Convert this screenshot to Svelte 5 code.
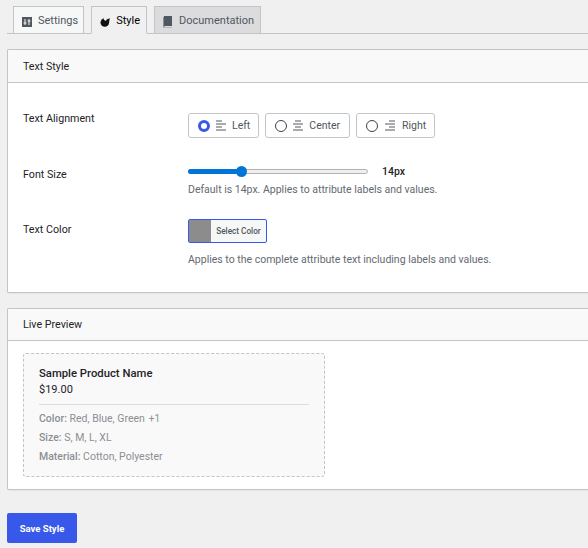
<script>
  const attrs = [
    { label: "Color:", value: "Red, Blue, Green", more: "+1" },
    { label: "Size:", value: "S, M, L, XL" },
    { label: "Material:", value: "Cotton, Polyester" },
  ];
  const aligns = [
    { name: "Left", checked: true, lines: ["M0 1h6", "M0 4h10", "M0 7h6", "M0 10h10"] },
    { name: "Center", checked: false, lines: ["M2 1h6", "M0 4h10", "M2 7h6", "M0 10h10"] },
    { name: "Right", checked: false, lines: ["M4 1h6", "M0 4h10", "M4 7h6", "M0 10h10"] },
  ];
</script>

<div class="page">
  <div class="tabs">
    <a class="tab">
      <svg class="icon" viewBox="0 0 10 10"><path fill="#50575e" d="M0 0h10v10H0z" /><path stroke="#f6f7f7" stroke-width="1" fill="none" d="M3 2v6M1.5 6h3M7 2v6M5.5 4h3" /></svg>
      Settings
    </a>
    <a class="tab active">
      <svg class="icon" viewBox="0 0 10 10"><circle cx="4.800" cy="5.500" r="4.300" fill="#111" /><path fill="#f0f0f1" d="M3.800 0h3v3.500c-.8.500-2 .3-3-1z" /><path fill="#111" d="M6 3.500 9.500 1c.3 1.500 0 3-.8 4.500z" /></svg>
      Style
    </a>
    <a class="tab muted">
      <svg class="icon book" viewBox="0 0 10 12"><path fill="#50575e" d="M1 0h8v10H2.500C1.700 10 1 10.300 1 11z" /><path fill="#8c8f94" d="M0 1h1v10.500h8v.5H1.500C.6 12 0 11.400 0 10.500z" /></svg>
      Documentation
    </a>
  </div>

  <section class="card">
    <h2>Text Style</h2>
    <div class="body settings">
      <div class="row">
        <div class="label">Text Alignment</div>
        <div class="field">
          <div class="aligns">
            {#each aligns as a}
              <label class="align">
                <span class="radio" class:on={a.checked}></span>
                <svg class="lines" viewBox="0 0 10 11">
                  {#each a.lines as d}<path {d} />{/each}
                </svg>
                {a.name}
              </label>
            {/each}
          </div>
        </div>
      </div>
      <div class="row">
        <div class="label">Font Size</div>
        <div class="field">
          <div class="slider">
            <div class="track"><div class="fill"></div><div class="thumb"></div></div>
            <span class="value">14px</span>
          </div>
          <p class="hint">Default is 14px. Applies to attribute labels and values.</p>
        </div>
      </div>
      <div class="row">
        <div class="label">Text Color</div>
        <div class="field">
          <button class="color"><span class="swatch"></span><span class="color-text">Select Color</span></button>
          <p class="hint">Applies to the complete attribute text including labels and values.</p>
        </div>
      </div>
    </div>
  </section>

  <section class="card preview-card">
    <h2>Live Preview</h2>
    <div class="body">
      <div class="preview">
        <div class="name">Sample Product Name</div>
        <div class="price">$19.00</div>
        <div class="attrs">
          {#each attrs as attr}
            <div class="attr"><b>{attr.label}</b> {attr.value}{#if attr.more}<span class="more">{attr.more}</span>{/if}</div>
          {/each}
        </div>
      </div>
    </div>
  </section>

  <button class="save">Save Style</button>
</div>

<style>
  :global(body) {
    background: #f0f0f1;
    font-family: Roboto, "Noto Sans", sans-serif;
    font-size: 11px;
    color: #3c434a;
    overflow: hidden;
  }

  .page {
    width: 600px;
    padding: 6px 0 0 7px;
    box-sizing: border-box;
  }

  .tabs {
    display: flex;
    gap: 7px;
    padding-left: 6px;
    border-bottom: 1px solid #c3c4c7;
    height: 27px;
    margin-right: -10px;
  }

  .tab {
    display: flex;
    align-items: center;
    height: 27px;
    box-sizing: border-box;
    padding: 0 6px 0 8px;
    gap: 6px;
    border: 1px solid #c3c4c7;
    border-bottom: none;
    background: #f6f7f7;
    color: #50575e;
    font-size: 11px;
  }

  .tab:first-child {
    padding-right: 5px;
  }

  .tab.active {
    background: #f0f0f1;
    color: #000;
    height: 28px;
    border-bottom: 1px solid #f0f0f1;
  }

  .tab.muted {
    background: #dcdcde;
  }

  .icon {
    width: 10px;
    height: 10px;
    margin-top: 3px;
  }

  .book {
    height: 12px;
  }

  .card {
    margin-top: 15px;
    background: #fff;
    border: 1px solid #c3c4c7;
    border-right: none;
    border-radius: 2px 0 0 2px;
    box-shadow: 0 1px 1px rgba(0, 0, 0, 0.04);
    height: 244px;
    box-sizing: border-box;
  }

  .preview-card {
    height: 182px;
  }

  h2 {
    margin: 0;
    height: 33px;
    box-sizing: border-box;
    padding: 0 15px;
    display: flex;
    align-items: center;
    background: #f9f9f9;
    border-bottom: 1px solid #c3c4c7;
    font-size: 10.700px;
    font-weight: 400;
    color: #1d2327;
  }

  .preview-card h2 {
    height: 32px;
  }

  .body {
    padding: 12px 15px;
  }

  .settings {
    padding-top: 29px;
    display: flex;
    flex-direction: column;
  }

  .row {
    display: flex;
  }

  .row:nth-child(1) {
    height: 56px;
  }

  .row:nth-child(2) {
    height: 55px;
  }

  .label {
    width: 165px;
    flex: none;
    font-size: 10.700px;
    color: #1d2327;
    line-height: 14px;
  }

  .aligns {
    display: flex;
    gap: 6px;
    margin-top: 1px;
  }

  .align {
    display: flex;
    align-items: center;
    height: 25px;
    box-sizing: border-box;
    padding: 0 8px 0 9px;
    gap: 6px;
    border: 1px solid #c3c4c7;
    border-radius: 3px;
    background: #fff;
    font-size: 10.500px;
    color: #50575e;
  }

  .align:nth-child(2) {
    padding-right: 9px;
  }

  .align:nth-child(3) {
    gap: 7px;
  }

  .radio {
    width: 12px;
    height: 12px;
    border-radius: 50%;
    border: 1px solid #3c434a;
    box-sizing: border-box;
  }

  .radio.on {
    border: 3.500px solid #3858e9;
  }

  .lines {
    width: 10px;
    height: 11px;
    fill: none;
    stroke: #50575e;
    stroke-width: 1;
  }

  .slider {
    display: flex;
    align-items: center;
    height: 14px;
    gap: 14px;
    margin-top: -4px;
  }

  .track {
    position: relative;
    width: 180px;
    height: 5px;
    background: #efefef;
    border: 1px solid #b2b2b2;
    border-radius: 3px;
    box-sizing: border-box;
  }

  .fill {
    position: absolute;
    left: -1px;
    top: -1px;
    height: 5px;
    width: 54px;
    border-radius: 3px 0 0 3px;
    background: #0075d5;
  }

  .thumb {
    position: absolute;
    left: 47px;
    top: -4px;
    width: 11px;
    height: 11px;
    border-radius: 50%;
    background: #0075d5;
  }

  .value {
    font-size: 10.500px;
    color: #1d2327;
    font-weight: 500;
  }

  .hint {
    margin: 4px 0 0;
    font-size: 10.500px;
    line-height: 15px;
    color: #646970;
  }

  .color {
    display: flex;
    align-items: stretch;
    width: 79px;
    height: 24px;
    padding: 0;
    border: 1px solid #3858e9;
    border-radius: 2px;
    background: #f6f7f7;
    font: inherit;
    margin-top: -4px;
  }

  .swatch {
    width: 22px;
    background: #8c8c8c;
  }

  .color-text {
    flex: 1;
    font-size: 8.200px;
    font-weight: 500;
    color: #50575e;
    line-height: 22px;
    text-align: center;
    white-space: nowrap;
  }

  .row:nth-child(3) .hint {
    margin-top: 9px;
  }

  .preview {
    width: 302px;
    height: 124px;
    box-sizing: border-box;
    padding: 12px 15px;
    background: #f9f9f9;
    border: 1px dashed #c3c4c7;
    border-radius: 3px;
  }

  .name {
    font-size: 11.300px;
    font-weight: 500;
    color: #1d2327;
    line-height: 16px;
  }

  .price {
    font-size: 11px;
    color: #1d2327;
    line-height: 16px;
  }

  .attrs {
    margin-top: 6px;
    border-top: 1px solid #dcdcde;
    padding-top: 4px;
  }

  .attr {
    font-size: 10.500px;
    line-height: 19px;
    color: #8c8f94;
  }

  .attr b {
    font-weight: 500;
  }

  .more {
    margin-left: 4px;
    font-size: 10px;
  }

  .save {
    display: block;
    margin-top: 23px;
    width: 70px;
    height: 30px;
    padding: 0;
    border: none;
    border-radius: 2px;
    background: #3858e9;
    color: #fff;
    font: inherit;
    font-size: 9.500px;
    font-weight: 700;
  }
</style>
